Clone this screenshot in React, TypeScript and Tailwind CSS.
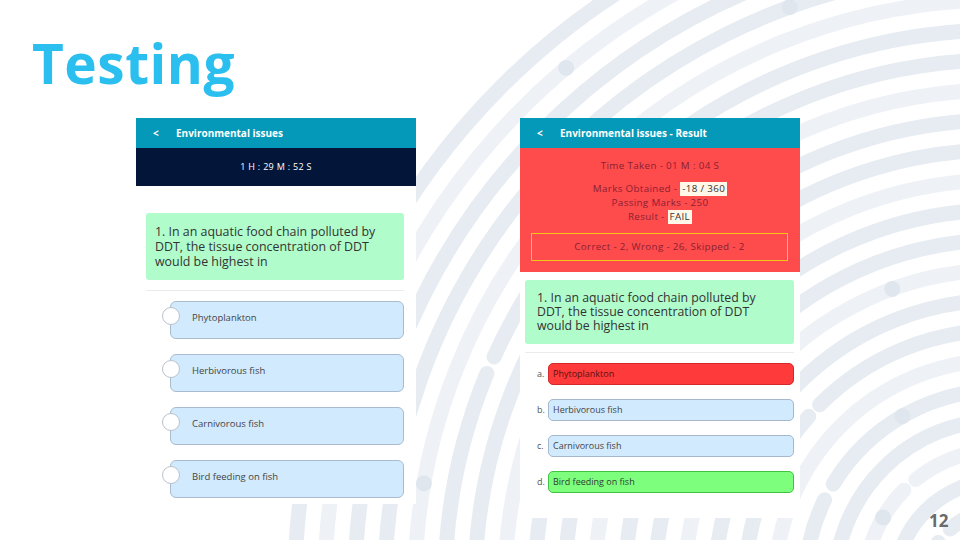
import React from "react";

const CX = 1000;
const CY = 585;

function Background() {
  const radii: number[] = [];
  for (let r = 45; r <= 720; r += 30) radii.push(r);
  const dots: Array<[number, number]> = [
    [705, 200], [675, 230], [615, 250], [585, 190], [555, 300], [525, 345],
    [495, 395], [465, 440], [435, 470], [405, 410], [375, 360], [345, 300],
    [315, 250], [285, 330], [255, 280], [225, 200], [195, 240], [165, 300],
    [135, 210], [105, 260], [645, 165], [615, 140], [705, 120], [525, 215],
  ];
  return (
    <svg className="absolute inset-0" width="960" height="540" viewBox="0 0 960 540">
      {radii.map((r, i) => (
        <circle
          key={r}
          cx={CX}
          cy={CY}
          r={r}
          fill="none"
          stroke={i % 3 === 0 ? "#eef2f7" : "#e7ecf2"}
          strokeWidth={15}
          strokeLinecap="round"
          strokeDasharray={i % 4 === 1 ? `${r * 1.1} 18 ${r * 2.4} 18` : i % 4 === 3 ? `${r * 0.8} 16 ${r * 3} 16` : undefined}
        />
      ))}
      {dots.map(([r, deg], i) => {
        const a = (deg * Math.PI) / 180;
        const x = CX + r * Math.cos(a);
        const y = CY + r * Math.sin(a);
        return <circle key={i} cx={x} cy={y} r={8} fill="#dfe6ee" />;
      })}
    </svg>
  );
}

function Header({ title }: { title: string }) {
  return (
    <div className="h-[30px] bg-[#0499b8] flex items-center text-white font-bold text-[10px] pl-[17px]">
      <span className="w-[23px]">&lt;</span>
      <span>{title}</span>
    </div>
  );
}

const qLines = [
  "1. In an aquatic food chain polluted by",
  "DDT, the tissue concentration of DDT",
  "would be highest in",
];

function QText({ lh }: { lh: string }) {
  return (
    <>
      {qLines.map((l) => (
        <div key={l} className={`${lh} overflow-visible whitespace-nowrap`}>
          {l}
        </div>
      ))}
    </>
  );
}

const options = ["Phytoplankton", "Herbivorous fish", "Carnivorous fish", "Bird feeding on fish"];

function LeftPhone() {
  return (
    <div className="w-[280px] h-[386px] bg-white flex flex-col">
      <Header title="Environmental issues" />
      <div className="h-[38px] bg-[#03163a] flex items-center justify-center text-white text-[9px] tracking-[0.3px]">
        1 H : 29 M : 52 S
      </div>
      <div className="mt-[27px] ml-[10px] mr-[12px] h-[67px] bg-[#b0fccb] rounded-[3px] pl-[9px] pt-[11px] text-[12.4px] text-[#333]">
        <QText lh="h-[15px] leading-[15px]" />
      </div>
      <div className="mt-[10px] ml-[10px] mr-[12px] border-t border-[#ececec]" />
      <div className="mt-[10px] flex flex-col gap-[15px]">
        {options.map((o) => (
          <div
            key={o}
            className="relative ml-[34px] mr-[12px] h-[38px] bg-[#d2eafd] border border-[#a9bccf] rounded-[6px] flex items-center pl-[21px] pb-[4px] text-[9.5px] text-[#444]"
          >
            <div className="absolute left-[-9px] top-[5px] w-[18px] h-[18px] rounded-full bg-white border border-[#b8c2cc]" />
            {o}
          </div>
        ))}
      </div>
    </div>
  );
}

function RightPhone() {
  const styles = [
    "bg-[#ff3a3a] border-[#d22a2a] text-[#5a1010]",
    "bg-[#d2eafd] border-[#a5b8cc] text-[#444]",
    "bg-[#d2eafd] border-[#a5b8cc] text-[#444]",
    "bg-[#7dff7d] border-[#41c241] text-[#2d3b2d]",
  ];
  const labels = ["a.", "b.", "c.", "d."];
  return (
    <div className="w-[280px] h-[400px] bg-white flex flex-col">
      <Header title="Environmental issues - Result" />
      <div className="h-[124px] bg-[#fe4c4c] flex flex-col items-center text-[9.8px] tracking-[0.35px] text-[#8b1e33]">
        <div className="mt-[11px] h-[14px] leading-[14px]">Time Taken - 01 M : 04 S</div>
        <div className="mt-[9px] h-[14px] leading-[14px] flex items-center">
          Marks Obtained -&nbsp;
          <span className="bg-[#fff8e8] text-[#333] px-[2px] leading-[14px]">-18 / 360</span>
        </div>
        <div className="h-[14px] leading-[14px]">Passing Marks - 250</div>
        <div className="h-[14px] leading-[14px] flex items-center">
          Result -&nbsp;
          <span className="bg-[#fff8e8] text-[#333] px-[2px] leading-[14px]">FAIL</span>
        </div>
        <div className="mt-[9px] ml-[11px] mr-[12px] self-stretch h-[28px] border border-[#f5c518] flex items-center justify-center">
          Correct - 2, Wrong - 26, Skipped - 2
        </div>
      </div>
      <div className="mt-[8px] ml-[5px] mr-[6px] h-[64px] bg-[#b0fccb] rounded-[3px] pl-[12px] pt-[11px] text-[12.3px] text-[#333]">
        <QText lh="h-[14px] leading-[14px]" />
      </div>
      <div className="mt-[8px] ml-[5px] mr-[6px] border-t border-[#ececec]" />
      <div className="mt-[10px] flex flex-col gap-[14px]">
        {options.map((o, i) => (
          <div key={o} className="flex items-center mr-[6px]">
            <span className="w-[28px] pl-[17px] text-[9px] text-[#555]">{labels[i]}</span>
            <div className={`flex-1 h-[22px] border rounded-[5px] flex items-center pl-[4px] text-[9px] ${styles[i]}`}>
              {o}
            </div>
          </div>
        ))}
      </div>
    </div>
  );
}

export default function App() {
  return (
    <div
      className="relative w-[960px] h-[540px] overflow-hidden bg-white"
      style={{ fontFamily: '"Open Sans", "Noto Sans", sans-serif' }}
    >
      <Background />
      <div className="relative flex flex-col">
        <div className="h-[118px] pl-[32px] pt-[27px]">
          <div className="text-[55px] leading-[72px] font-bold text-[#2bbff0] tracking-[0.5px]" style={{ fontFamily: '"Open Sans", sans-serif' }}>
            Testing
          </div>
        </div>
        <div className="flex items-start pl-[136px] gap-[104px]">
          <LeftPhone />
          <RightPhone />
        </div>
      </div>
      <div className="absolute left-[929px] top-[508px] text-[17px] font-bold text-[#6b6b6b]">12</div>
    </div>
  );
}
